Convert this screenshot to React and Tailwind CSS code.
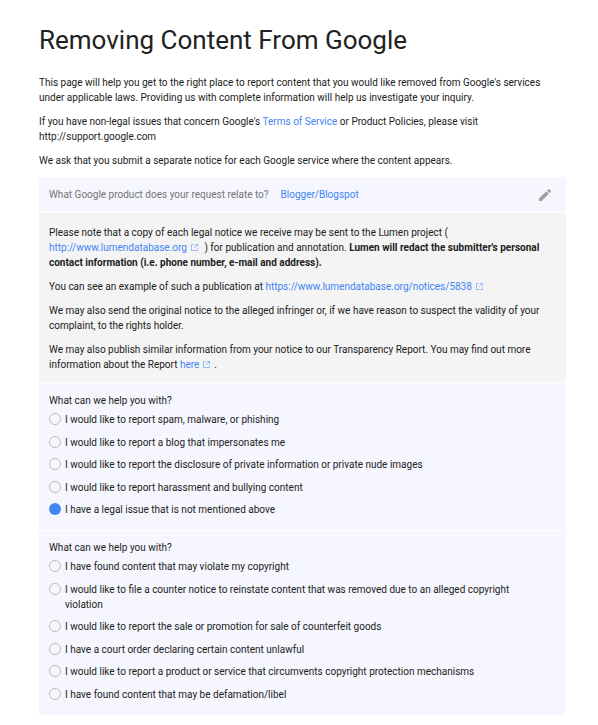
const P = ({ children, className = "" }) => <p className={`m-0 ${className}`}>{children}</p>;

const Ext = () => (
  <svg viewBox="0 0 24 24" className="inline-block w-[9px] h-[9px] mx-[3px] align-[-1px]" fill="none" stroke="#7baaf7" strokeWidth="2">
    <path d="M10 4H4v16h16v-6" />
    <path d="M14 4h6v6M20 4 11 13" />
  </svg>
);

const A = ({ children }) => <a className="text-[#4285f4]">{children}</a>;

const Radio = ({ checked, label, className = "" }) => (
  <div className={`flex items-start gap-[4px] pr-[20px] ${className}`}>
    {checked ? (
      <span className="mt-[1px] w-3 h-3 shrink-0 rounded-full bg-[#4285f4]" />
    ) : (
      <span className="mt-[1px] w-3 h-3 shrink-0 rounded-full border border-[#bdbdbd]" />
    )}
    <span>{label}</span>
  </div>
);

const Group = ({ items, className = "" }) => (
  <div className={`bg-[#f6f7fe] px-[10px] text-[#212121] ${className}`}>
    <div>What can we help you with?</div>
    {items.map((it, i) => (
      <Radio key={i} {...it} className={i === 0 ? "mt-[4px]" : "mt-[7.5px]"} />
    ))}
  </div>
);

export default function App() {
  return (
    <div className="min-h-[725px] bg-white pl-[39px] pr-[32px] pt-[25px] text-[#212121] text-[10px] leading-[15px] font-['Roboto',sans-serif]">
      <h1 className="m-0 text-[26px] leading-[30px] font-normal text-[#212121]">Removing Content From Google</h1>
      <div className="mt-[20px] flex flex-col gap-[9px]">
        <P>
          This page will help you get to the right place to report content that you would like removed from Google's services under applicable laws. Providing us with complete information will help us investigate your inquiry.
        </P>
        <P>
          If you have non-legal issues that concern Google's <A>Terms of Service</A> or Product Policies, please visit http://support.google.com
        </P>
        <P>We ask that you submit a separate notice for each Google service where the content appears.</P>
      </div>

      <div className="mt-[9px] h-[35px] bg-[#f6f7fe] pl-[10px] pr-[13px] flex items-center justify-between">
        <div>
          <span className="text-[#757575]">What Google product does your request relate to?</span>
          <span className="ml-[12px] text-[#4285f4]">Blogger/Blogspot</span>
        </div>
        <svg viewBox="0 0 24 24" className="w-[16px] h-[16px]" fill="#9e9e9e">
          <path d="M3 17.25V21h3.75L17.81 9.94l-3.75-3.75L3 17.25zM20.71 7.04a1 1 0 0 0 0-1.41l-2.34-2.34a1 1 0 0 0-1.41 0l-1.83 1.83 3.75 3.75 1.83-1.83z" />
        </svg>
      </div>

      <div className="mt-[1px] bg-[#f4f4f4] h-[169px] px-[10px] pt-[12px] flex flex-col gap-[9px]">
        <P>
          Please note that a copy of each legal notice we receive may be sent to the Lumen project ( <A>http://www.lumendatabase.org</A>
          <Ext /> ) for publication and annotation. <b className="font-bold">Lumen will redact the submitter's personal contact information (i.e. phone number, e-mail and address).</b>
        </P>
        <P>
          You can see an example of such a publication at <A>https://www.lumendatabase.org/notices/5838</A>
          <Ext />
        </P>
        <P>We may also send the original notice to the alleged infringer or, if we have reason to suspect the validity of your complaint, to the rights holder.</P>
        <P>
          We may also publish similar information from your notice to our Transparency Report. You may find out more information about the Report <A>here</A>
          <Ext />.
        </P>
      </div>

      <Group
        className="mt-[1px] h-[147px] pt-[10px]"
        items={[
          { label: "I would like to report spam, malware, or phishing" },
          { label: "I would like to report a blog that impersonates me" },
          { label: "I would like to report the disclosure of private information or private nude images" },
          { label: "I would like to report harassment and bullying content" },
          { label: "I have a legal issue that is not mentioned above", checked: true },
        ]}
      />
      <Group
        className="mt-[1px] h-[184px] pt-[9px]"
        items={[
          { label: "I have found content that may violate my copyright" },
          { label: "I would like to file a counter notice to reinstate content that was removed due to an alleged copyright violation" },
          { label: "I would like to report the sale or promotion for sale of counterfeit goods" },
          { label: "I have a court order declaring certain content unlawful" },
          { label: "I would like to report a product or service that circumvents copyright protection mechanisms" },
          { label: "I have found content that may be defamation/libel" },
        ]}
      />
    </div>
  );
}
